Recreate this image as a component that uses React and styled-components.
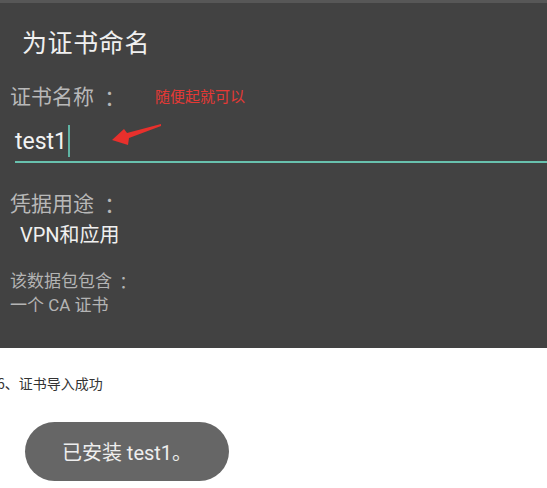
import styled, { createGlobalStyle } from 'styled-components';

const GlobalStyle = createGlobalStyle`
  body {
    margin: 0;
    background: #ffffff;
    font-family: Roboto, "Noto Sans CJK SC", sans-serif;
  }
`;

const App = () => {
  return (
    <Page>
      <GlobalStyle />
      <Dialog>
        <Title>为证书命名</Title>
        <LabelRow>
          <Label>证书名称<Colon>：</Colon></Label>
          <Note>随便起就可以</Note>
        </LabelRow>
        <Input>
          <InputText>test1</InputText>
          <Caret />
        </Input>
        <Label $top="31px">凭据用途<Colon>：</Colon></Label>
        <Value>VPN和应用</Value>
        <Small $top="28px">该数据包包含<Colon $gap="3px">：</Colon></Small>
        <Small $top="7px">一个 CA 证书</Small>
        <Arrow width="58" height="30" viewBox="0 0 58 30">
          <polygon points="4,22 16,11 19,15 53,6 53,8 21,20 20,27" fill="#e8302c" />
        </Arrow>
      </Dialog>
      <Caption>6、证书导入成功</Caption>
      <Toast>已安装 test1。</Toast>
    </Page>
  );
};
export default App;

const Page = styled.div`
  width: 547px;
  height: 488px;
  overflow: hidden;
  background: #ffffff;
`;
const Dialog = styled.div`
  position: relative;
  height: 345px;
  background: #424242;
  border-top: 3px solid #575757;
  display: flex;
  flex-direction: column;
  padding-left: 10px;
`;
const Title = styled.div`
  margin: 28px 0 0 12px;
  font-size: 25px;
  line-height: 25px;
  letter-spacing: 0.6px;
  color: #f0f0f0;
`;
const LabelRow = styled.div`
  margin-top: 31px;
  display: flex;
  align-items: center;
  gap: 35px;
`;
const Label = styled.div`
  margin-top: ${(p) => p.$top || '0'};
  font-size: 21px;
  line-height: 21px;
  color: #b8b8b8;
`;
const Colon = styled.span`
  display: inline-block;
  vertical-align: top;
  margin-left: ${(p) => p.$gap || '5px'};
  font-family: "Noto Sans CJK TC", sans-serif;
`;
const Note = styled.div`
  font-size: 15px;
  line-height: 15px;
  color: #e53935;
`;
const Input = styled.div`
  margin: 17px 0 0 5px;
  display: flex;
  align-items: flex-start;
  padding-bottom: 4px;
  border-bottom: 2px solid #68c1ae;
`;
const InputText = styled.div`
  font-size: 23px;
  line-height: 28px;
  padding-top: 3px;
  color: #f2f2f2;
`;
const Caret = styled.div`
  width: 2px;
  height: 32px;
  margin-left: 1px;
  background: #5fb3a3;
`;
const Value = styled.div`
  margin: 10px 0 0 10px;
  font-size: 20px;
  line-height: 20px;
  color: #f0f0f0;
`;
const Small = styled.div`
  margin-top: ${(p) => p.$top};
  font-size: 17px;
  line-height: 17px;
  color: #b4b4b4;
`;
const Arrow = styled.svg`
  position: absolute;
  left: 108px;
  top: 115px;
`;
const Caption = styled.div`
  margin: 28px 0 0 -3px;
  font-family: "Noto Sans CJK SC", sans-serif;
  font-size: 14px;
  line-height: 14px;
  color: #333333;
`;
const Toast = styled.div`
  margin: 32px 0 0 25px;
  width: 204px;
  height: 59px;
  border-radius: 30px;
  background: #666666;
  display: flex;
  align-items: center;
  justify-content: center;
  font-size: 20px;
  color: #eeeeee;
`;
